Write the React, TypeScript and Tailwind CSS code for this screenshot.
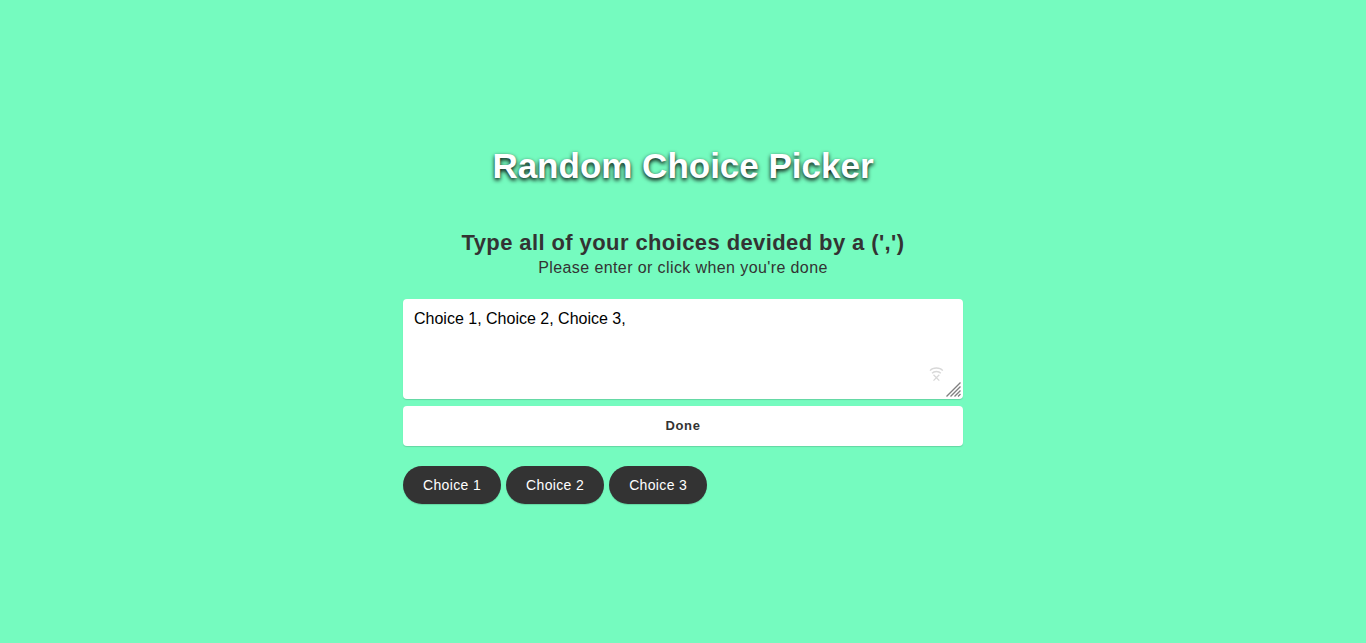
import { useState } from 'react';
import type { KeyboardEvent } from 'react';

function OfflineIcon() {
  return (
    <svg
      aria-hidden="true"
      className="pointer-events-none absolute right-[19px] bottom-4 h-4 w-4"
      viewBox="0 0 16 16"
      fill="none"
      stroke="#d8d8d8"
      strokeWidth="1.3"
    >
      <path d="M2 3.6C5 0.1 11.8 0.1 14.8 3.6" />
      <path d="M4 6.2C6 3.9 10.8 3.9 12.8 6.2" />
      <path d="M5.5 7.8L11.3 13.6M11.3 7.8L5.5 13.6" />
    </svg>
  );
}

function GripIcon() {
  return (
    <svg
      aria-hidden="true"
      className="pointer-events-none absolute right-0.5 bottom-0.5 h-4 w-4"
      viewBox="0 0 16 16"
      fill="none"
      stroke="#808080"
      strokeWidth="1.4"
    >
      <path d="M1.5 15.5L15.5 1.5M5.5 15.5L15.5 5.5M9.5 15.5L15.5 9.5M13 15.5L15.5 13" />
    </svg>
  );
}

export default function App() {
  const [text, setText] = useState('Choice 1, Choice 2, Choice 3,');
  const [picked, setPicked] = useState(-1);
  const choices = text
    .split(',')
    .map((c) => c.trim())
    .filter(Boolean);

  const pick = () => setPicked(Math.floor(Math.random() * choices.length));

  const onKeyDown = (e: KeyboardEvent) => {
    if (e.key === 'Enter') {
      e.preventDefault();
      pick();
    }
  };

  return (
    <main className="flex min-h-screen flex-col items-center justify-center bg-[#75fbbf] pt-[7px] font-['Liberation_Sans',Arial,sans-serif] text-[#333333]">
      <h1 className="mb-[41px] text-center text-[35px] leading-10 font-bold text-white [text-shadow:0_2px_4px_#000000]">
        Random Choice Picker
      </h1>
      <div className="w-full max-w-[560px]">
        <label htmlFor="choices" className="mb-[22px] block text-center tracking-wide">
          <span className="block text-[22px] leading-8 font-bold">Type all of your choices devided by a (',')</span>
          <span className="block text-base leading-[18px]">Please enter or click when you're done</span>
        </label>
        <div className="relative mb-[7px]">
          <textarea
            id="choices"
            value={text}
            onChange={(e) => setText(e.target.value)}
            onKeyDown={onKeyDown}
            spellCheck={false}
            className="block h-[100px] w-full resize-none rounded bg-white px-[11px] py-2 text-base text-black shadow-[0_1px_1px_rgba(0,0,0,0.15)] outline-none"
          />
          <OfflineIcon />
          <GripIcon />
        </div>
        <button
          type="button"
          onClick={pick}
          className="mb-5 block h-10 w-full rounded bg-white text-[13px] font-bold tracking-wider shadow-[0_1px_1px_rgba(0,0,0,0.15)]"
        >
          Done
        </button>
        <ul className="flex flex-wrap gap-[5px]">
          {choices.map((choice, i) => (
            <li
              key={i}
              className={`rounded-full px-5 py-[9px] text-sm tracking-wide text-white shadow-[0_1px_1px_rgba(0,0,0,0.15)] ${i === picked ? 'bg-[#0f8a5f]' : 'bg-[#333333]'}`}
            >
              {choice}
            </li>
          ))}
        </ul>
      </div>
    </main>
  );
}
